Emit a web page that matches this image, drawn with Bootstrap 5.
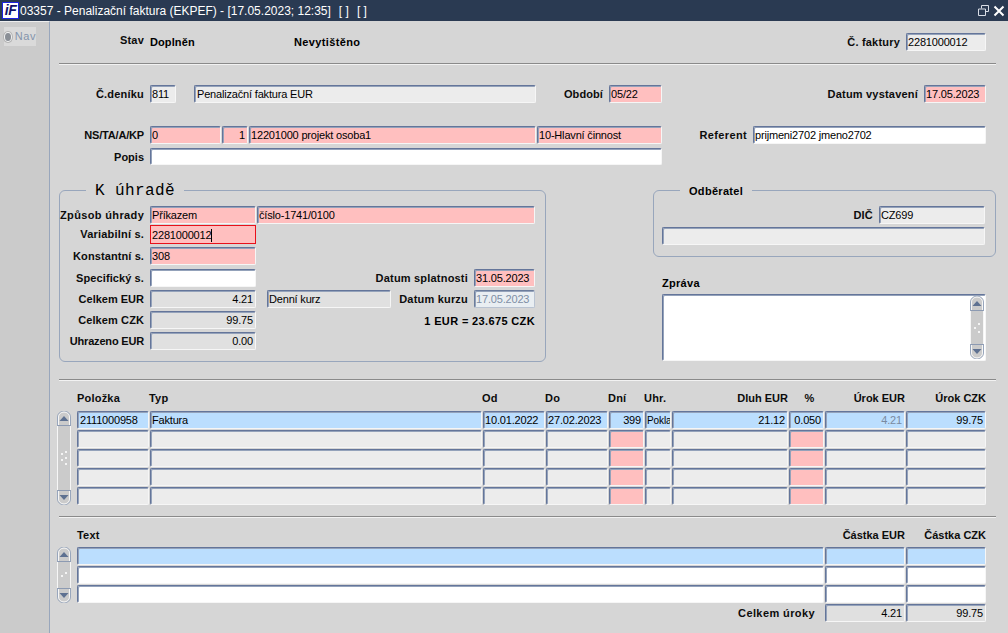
<!DOCTYPE html>
<html lang="cs">
<head>
<meta charset="utf-8">
<title>Penalizační faktura</title>
<link rel="stylesheet" href="https://cdn.jsdelivr.net/npm/bootstrap@5.3.0/dist/css/bootstrap.min.css">
<style>
html,body{height:100%;overflow:hidden}
body{background:#d6d6d6;color:#000;font:11px/1 "Liberation Sans",Arial,sans-serif}
.app{width:1008px;height:633px;overflow:hidden}
.tbar{height:21px;background:#2a3a52;color:#fff;font-size:12px;padding-left:2px}
.tlogo{width:17px;height:17px;margin-right:1px;background:#fff;border:1px solid #1c22e0;color:#10106a;font:italic 700 14px/15px "Liberation Sans",sans-serif;letter-spacing:-.5px;text-align:center;flex:none}
.tctl{margin-right:3px;gap:4px}
.side{width:50px;flex:none;background:#cbcbcb;border-right:1px solid #98a6bc;border-top:1px solid #eee;padding:5px 0 0 4px;height:612px}
.navb{width:32px;height:19px;background:#dadada;color:#8494ac;letter-spacing:.55px;gap:3px}
.radio{width:10px;height:10px;margin-left:0;border-radius:50%;background:#8a8f96;border:1px solid #f4f4f4;box-shadow:0 0 0 1px #b4b4b4}
.main{width:958px;flex:none}
.ln{display:flex;align-items:center;height:18px;flex:none;padding-right:22px}
.lab{flex:none;font-weight:700;text-align:right;padding-right:6px;letter-spacing:.2px;color:#0c0c0c;white-space:nowrap}
.cap{letter-spacing:0}.capn{letter-spacing:-.18px}.lsa{letter-spacing:.36px}.lsb{letter-spacing:.1px}
.lowr{padding-top:2px}
.w100{width:100px}.w144{width:144px;letter-spacing:.1px}.w73{width:73px}.w91{width:91px}.w77{width:83px}.w212{width:218px}
.fld{flex:none;height:100%;border-top:1px solid #64759a;border-left:1px solid #64759a;border-right:1px solid #f6f6f6;border-bottom:1px solid #f6f6f6;box-shadow:inset 1px 1px 0 #94a2ba;border-radius:2px;padding:1px 1px 0 1px;display:flex;align-items:center;white-space:nowrap;overflow:hidden;font-size:11px;letter-spacing:-.18px;background:#ececec}
.num{justify-content:flex-end;padding-right:2px}
.pink{background:#ffbfbf}.white{background:#fff}.lt{background:#e0e0e0}.blue{background:#bbdefe}
.f26{width:26px}.f53{width:53px}.f62{width:62px}.f61{width:61px}.f71{width:71px}.f80{width:80px}.f106{width:106px}.f124{width:124px}.f125{width:125px}.f233{width:233px}.f277{width:278px}.f287{width:287px}.f342{width:342px}.f512{width:512px}.f323{width:323px}
.pl2{padding-left:2px}
.sp1{margin-left:1px}.sp18{margin-left:18px}.sp11{margin-left:11px}
.fill{flex:1 1 0}
.r1{margin-top:12px}.r2{margin-top:20px}.r3{margin-top:23px}.r4{margin-top:4px;height:17px}
.stv{margin-bottom:4px}
.sep{margin:12px 12px 0 9px;height:2px;border:0;border-top:1px solid #8a8a8a;border-bottom:1px solid #f2f2f2;opacity:1;background:none}
.sep2{margin-top:17px}.sep3{margin-top:11px}
.boxes{margin-top:17px;align-items:flex-start}
.gbox{margin:0;min-width:0;border:1px solid #98a6bc;border-radius:6px;padding:0 0 11px 0;flex:none}
.gbox legend{float:none;width:auto;margin:0 0 0 26px;padding:0 9px;height:16px;font:700 11px/18px "Liberation Sans",sans-serif;letter-spacing:.3px}
.gbox legend.mono{font:400 16px/19px "Liberation Mono",monospace;letter-spacing:.4px}
.gb-l{width:487px;margin-left:9px}
.gb-l .ln,.rcol .ln{padding-right:0}
.first{margin-top:8px}
.m1{margin-top:1px}.m3{margin-top:3px}.m4{margin-top:4px}
.h19{height:19px}
.lbl-w{width:90px}
.fld.varb{border:1px solid #e8101a;border-radius:0;box-shadow:none;background:#ffbfbf}
.caret-c{display:inline-block;width:1px;height:13px;background:#000}
.grey-t{color:#7a8aa0}
.fld.dk{border-color:#6c7d9c #b9c3d2 #b9c3d2 #6c7d9c;background:#e9eef2;color:#7e8ea5}
.rate{font-weight:700;padding:2px 10px 0 0;letter-spacing:.36px;text-align:right;flex:1 1 0;white-space:nowrap}
.odlab{width:225px}
.odf{margin-left:8px}
.zpr{height:16px;margin:17px 0 4px 9px;font-weight:700;line-height:18px;letter-spacing:.3px}
.rcol{flex:none;width:343px;margin-left:107px}
.rcol .gbox{width:343px}
.ta{margin-left:9px;width:324px;height:67px;padding:1px 1px 1px 0;justify-content:flex-end;align-items:stretch}
.gridm,.gridt{display:grid;column-gap:1px;row-gap:1px;margin:9px 0 0 7px}
.gridm{grid-template-columns:19px 72px 332px 62px 62px 35px 26px 116px 35px 80px 80px;grid-template-rows:20px repeat(5,18px)}
.gridt{grid-template-columns:19px 747px 80px 80px;grid-template-rows:19px repeat(4,18px)}
.hd{font-weight:700;letter-spacing:.2px;color:#0c0c0c;white-space:nowrap;height:16px;line-height:16px}
.hdl{margin-left:-1px}
.hr{text-align:right;letter-spacing:0}
.pc{text-align:center;padding-left:6px}
.sb{grid-column:1;width:14px;display:flex;flex-direction:column}
.sb5{grid-row:2 / 7}.sb3{grid-row:2 / 5}
.sb svg,.sbv>svg{display:block;flex:none}
.sbm{flex:1 1 auto;background:#cbcbcb;border-left:1px solid #f6f6f6;border-right:1px solid #f6f6f6;display:flex;align-items:center;justify-content:center}
.sbv{width:14px;flex:none;display:flex;flex-direction:column}
.small9{font-size:10px;letter-spacing:-.1px}
.tot{padding-right:9px;letter-spacing:.4px}
</style>
</head>
<body>
<div class="app d-flex flex-column">
  <div class="tbar d-flex align-items-center">
    <div class="tlogo">iF</div>
    <span>03357 - Penalizační faktura (EKPEF) - [17.05.2023; 12:35]</span>
    <span class="ms-2">[ ]</span><span class="ms-2">[ ]</span>
    <div class="ms-auto tctl d-flex align-items-center">
      <svg width="11" height="11" viewBox="0 0 11 11"><path d="M3.500 3.500v-3h7v6h-3M.5 4h7v6.500h-7z" fill="none" stroke="#d8dde6"/></svg>
      <svg width="12" height="12" viewBox="0 0 12 12"><path d="M1.500 1.500l9 9M10.500 1.500l-9 9" stroke="#fff" stroke-width="2"/></svg>
    </div>
  </div>
  <div class="d-flex">
    <div class="side">
      <div class="navb d-flex align-items-center"><span class="radio"></span><span>Nav</span></div>
    </div>
    <div class="main d-flex flex-column">
      <div class="ln r1"><div class="lab w100 stv">Stav</div><div class="w144 fw-bold">Doplněn</div><div class="fill fw-bold lsa">Nevytištěno</div><div class="lab">Č. faktury</div><div class="fld f80">2281000012</div></div>
      <hr class="sep">
      <div class="ln r2"><div class="lab w100">Č.deníku</div><div class="fld f26">811</div><div class="fld f342 sp18 pl2">Penalizační faktura EUR</div><div class="lab lsb w73">Období</div><div class="fld f53 pink">05/22</div><div class="lab fill">Datum vystavení</div><div class="fld f62 pink">17.05.2023</div></div>
      <div class="ln r3"><div class="lab capn w100">NS/TA/A/KP</div><div class="fld f71 pink">0</div><div class="fld f26 pink num sp1">1</div><div class="fld f287 pink sp1">12201000 projekt osoba1</div><div class="fld f125 pink sp1">10-Hlavní činnost</div><div class="lab lsa w91">Referent</div><div class="fld f233 white">prijmeni2702 jmeno2702</div></div>
      <div class="ln r4"><div class="lab cap w100 lowr">Popis</div><div class="fld f512 white"></div></div>
      <div class="d-flex boxes">
        <fieldset class="gbox gb-l">
          <legend class="mono">K úhradě</legend>
          <div class="ln first"><div class="lab lsa lbl-w">Způsob úhrady</div><div class="fld f106 pink">Příkazem</div><div class="fld f277 pink sp1">číslo-1741/0100</div></div>
          <div class="ln m1 h19"><div class="lab lbl-w">Variabilní s.</div><div class="fld f106 varb">2281000012<span class="caret-c"></span></div></div>
          <div class="ln m3"><div class="lab lsb lbl-w">Konstantní s.</div><div class="fld f106 pink">308</div></div>
          <div class="ln m4"><div class="lab lsb lbl-w">Specifický s.</div><div class="fld f106 white"></div><div class="lab w212">Datum splatnosti</div><div class="fld f61 pink">31.05.2023</div></div>
          <div class="ln m3"><div class="lab cap lbl-w">Celkem EUR</div><div class="fld f106 lt num">4.21</div><div class="fld f124 lt sp11">Denní kurz</div><div class="lab w77">Datum kurzu</div><div class="fld f61 dk">17.05.2023</div></div>
          <div class="ln m3"><div class="lab lsb lbl-w">Celkem CZK</div><div class="fld f106 lt num">99.75</div><div class="rate">1 EUR = 23.675 CZK</div></div>
          <div class="ln m3"><div class="lab capn lbl-w">Uhrazeno EUR</div><div class="fld f106 lt num">0.00</div></div>
        </fieldset>
        <div class="rcol">
          <fieldset class="gbox">
            <legend>Odběratel</legend>
            <div class="ln first"><div class="lab odlab">DIČ</div><div class="fld f106">CZ699</div></div>
            <div class="ln m3 odf"><div class="fld f323"></div></div>
          </fieldset>
          <div class="zpr">Zpráva</div>
          <div class="fld white ta">
            <div class="sbv">
              <svg width="14" height="15" viewBox="0 0 14 15"><path d="M.5 15V6a6 5.500 0 0 1 13 0v9z" fill="#cbcbcb" stroke="#98a6bc"/><path d="M1.500 15V6a5 4.500 0 0 1 11 0v9" fill="none" stroke="#f6f6f6"/><path d="M.5 14.500h13" stroke="#8c9ab2"/><path d="M7 5l4.500 5h-9z" fill="#5e7191"/></svg>
              <div class="sbm"><svg width="8" height="12" viewBox="0 0 8 12"><path d="M5 1h2v2H5zM1 5h2v2H1zM5 9h2v2H5z" fill="#f4f4f4"/></svg></div>
              <svg width="14" height="15" viewBox="0 0 14 15"><path d="M.5 0v9a6 5.500 0 0 0 13 0V0z" fill="#cbcbcb" stroke="#98a6bc"/><path d="M1.500 0v9a5 4.500 0 0 0 11 0V0" fill="none" stroke="#f6f6f6"/><path d="M.5 .5h13" stroke="#8c9ab2"/><path d="M7 10l4.500-5h-9z" fill="#5e7191"/></svg>
            </div>
          </div>
        </div>
      </div>
      <hr class="sep sep2">
      <div class="gridm">
        <div></div><div class="hd">Položka</div><div class="hd hdl">Typ</div><div class="hd hdl">Od</div><div class="hd hdl">Do</div><div class="hd hdl">Dní</div><div class="hd hdl">Uhr.</div><div class="hd hr">Dluh EUR</div><div class="hd pc">%</div><div class="hd hr">Úrok EUR</div><div class="hd hr">Úrok CZK</div>
        <div class="sb sb5">
          <svg width="14" height="15" viewBox="0 0 14 15"><path d="M.5 15V6a6 5.500 0 0 1 13 0v9z" fill="#cbcbcb" stroke="#98a6bc"/><path d="M1.500 15V6a5 4.500 0 0 1 11 0v9" fill="none" stroke="#f6f6f6"/><path d="M.5 14.500h13" stroke="#8c9ab2"/><path d="M7 5l4.500 5h-9z" fill="#5e7191"/></svg>
          <div class="sbm"><svg width="8" height="16" viewBox="0 0 8 16"><path d="M5 1h2v2H5zM1 3h2v2H1zM5 7h2v2H5zM1 9h2v2H1zM5 13h2v2H5z" fill="#f4f4f4"/></svg></div>
          <svg width="14" height="15" viewBox="0 0 14 15"><path d="M.5 0v9a6 5.500 0 0 0 13 0V0z" fill="#cbcbcb" stroke="#98a6bc"/><path d="M1.500 0v9a5 4.500 0 0 0 11 0V0" fill="none" stroke="#f6f6f6"/><path d="M.5 .5h13" stroke="#8c9ab2"/><path d="M7 10l4.500-5h-9z" fill="#5e7191"/></svg>
        </div>
        <div class="fld blue pl2">2111000958</div><div class="fld blue">Faktura</div><div class="fld blue">10.01.2022</div><div class="fld blue">27.02.2023</div><div class="fld blue num">399</div><div class="fld blue small9">Pokladna</div><div class="fld blue num">21.12</div><div class="fld blue num">0.050</div><div class="fld blue num grey-t">4.21</div><div class="fld blue num">99.75</div>
        <div class="fld"></div><div class="fld"></div><div class="fld"></div><div class="fld"></div><div class="fld pink"></div><div class="fld"></div><div class="fld"></div><div class="fld pink"></div><div class="fld"></div><div class="fld"></div>
        <div class="fld"></div><div class="fld"></div><div class="fld"></div><div class="fld"></div><div class="fld pink"></div><div class="fld"></div><div class="fld"></div><div class="fld pink"></div><div class="fld"></div><div class="fld"></div>
        <div class="fld"></div><div class="fld"></div><div class="fld"></div><div class="fld"></div><div class="fld pink"></div><div class="fld"></div><div class="fld"></div><div class="fld pink"></div><div class="fld"></div><div class="fld"></div>
        <div class="fld"></div><div class="fld"></div><div class="fld"></div><div class="fld"></div><div class="fld pink"></div><div class="fld"></div><div class="fld"></div><div class="fld pink"></div><div class="fld"></div><div class="fld"></div>
      </div>
      <hr class="sep sep3">
      <div class="gridt">
        <div></div><div class="hd">Text</div><div class="hd hr">Částka EUR</div><div class="hd hr">Částka CZK</div>
        <div class="sb sb3">
          <svg width="14" height="15" viewBox="0 0 14 15"><path d="M.5 15V6a6 5.500 0 0 1 13 0v9z" fill="#cbcbcb" stroke="#98a6bc"/><path d="M1.500 15V6a5 4.500 0 0 1 11 0v9" fill="none" stroke="#f6f6f6"/><path d="M.5 14.500h13" stroke="#8c9ab2"/><path d="M7 5l4.500 5h-9z" fill="#5e7191"/></svg>
          <div class="sbm"><svg width="8" height="8" viewBox="0 0 8 8"><path d="M5 1h2v2H5zM1 4h2v2H1z" fill="#f4f4f4"/></svg></div>
          <svg width="14" height="15" viewBox="0 0 14 15"><path d="M.5 0v9a6 5.500 0 0 0 13 0V0z" fill="#cbcbcb" stroke="#98a6bc"/><path d="M1.500 0v9a5 4.500 0 0 0 11 0V0" fill="none" stroke="#f6f6f6"/><path d="M.5 .5h13" stroke="#8c9ab2"/><path d="M7 10l4.500-5h-9z" fill="#5e7191"/></svg>
        </div>
        <div class="fld blue"></div><div class="fld blue"></div><div class="fld blue"></div>
        <div class="fld white"></div><div class="fld white"></div><div class="fld white"></div>
        <div class="fld white"></div><div class="fld white"></div><div class="fld white"></div>
        <div></div><div class="lab tot d-flex align-items-center justify-content-end">Celkem úroky</div><div class="fld lt num">4.21</div><div class="fld lt num">99.75</div>
      </div>
    </div>
  </div>
</div>
</body>
</html>
